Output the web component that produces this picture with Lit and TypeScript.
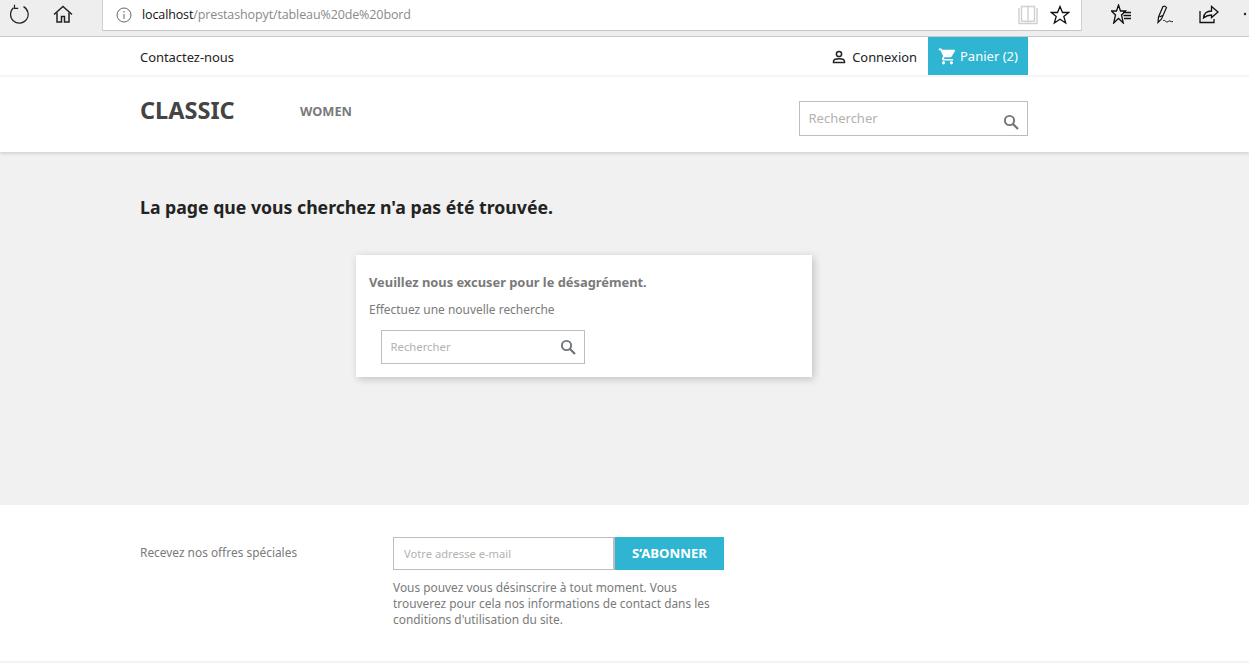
import { LitElement, html, css, svg } from "lit";
import { customElement } from "lit/decorators.js";

const searchIcon = svg`<svg class="si" viewBox="0 0 16 16" width="16" height="16" fill="none" stroke="#6f7478"><circle cx="6.500" cy="6.500" r="4.600" stroke-width="1.900"/><path d="M10 10l5 5" stroke-width="2.200"/></svg>`;

@customElement("app-root")
export class AppRoot extends LitElement {
  static styles = css`
    :host { display: block; height: 670px; overflow: hidden; background: #fff; font-family: "Noto Sans", sans-serif; color: #7a7a7a; }
    * { box-sizing: border-box; }
    .chrome { height: 37px; background: #eeeeee; border-bottom: 1px solid #c9c9c9; display: flex; align-items: flex-start; position: relative; }
    .nav-icons { flex: none; width: 102px; height: 28px; display: flex; align-items: center; }
    .nav-icons svg:first-child { margin-left: 9px; }
    .nav-icons svg:last-child { margin-left: 24px; }
    .addr { flex: none; width: 980px; height: 31px; background: #fff; border-left: 1px solid #d0d0d0; border-right: 1px solid #d0d0d0; border-bottom: 1px solid #c6c6c6; display: flex; align-items: center; padding-left: 13px; font: 12.500px/1 "Open Sans", sans-serif; letter-spacing: -0.120px; }
    .addr .host { color: #111; margin-left: 10px; }
    .addr .path { color: #8a8a8a; }
    .addr .end { margin-left: auto; display: flex; align-items: center; gap: 12px; padding-right: 11px; }
    .tools { flex: none; display: flex; align-items: center; height: 28px; }
    .tools svg:first-child { margin-left: 29px; }
    .tools svg { margin-right: 24px; flex: none; }
    .topbar { height: 40px; border-bottom: 2px solid #f6f6f6; }
    .wrap { width: 888px; margin-left: 140px; display: flex; }
    .topbar .wrap { height: 38px; align-items: center; font-size: 13px; color: #232323; }
    .contact { letter-spacing: -0.050px; margin-top: 2px; }
    .conn { margin-left: auto; display: flex; align-items: center; gap: 5px; margin-top: 2px; margin-right: 11px; font-size: 12.900px; }
    .cart { width: 100px; height: 38px; background: #2fb5d2; color: #fff; display: flex; align-items: center; padding-left: 10px; gap: 3px; font-size: 13px; }
    .header { height: 75px; background: #fff; box-shadow: 0 2px 3px rgba(0,0,0,.12); position: relative; }
    .header .wrap { height: 100%; }
    .logo { font-size: 23.500px; font-weight: 700; color: #444; line-height: 1; margin-top: 22px; width: 160px; }
    .menu { font-size: 12.800px; font-weight: 700; color: #7a7a7a; margin-top: 25px; line-height: 18px; }
    .search { display: flex; justify-content: space-between; border: 1px solid #bdbdbd; background: #fff; color: #b4b2ae; }
    .search.big { width: 229px; height: 35px; margin-left: auto; margin-top: 24px; font-size: 13px; padding: 7px 8px 0 8.500px; }
    .search.big .si { margin-top: 5px; }
    .search.small { width: 204px; height: 34px; margin: 0 0 0 12px; font-size: 11.300px; padding: 8px 8px 0 8.500px; }
    main { height: 353px; background: #f1f1f1; padding-top: 43px; }
    h1 { margin: 0 0 0 140px; font-size: 17.680px; line-height: 24px; font-weight: 700; color: #232323; }
    .card { width: 456px; height: 122px; margin: 36px 0 0 356px; background: #fff; box-shadow: 2px 2px 8px rgba(0,0,0,.2); padding: 18px 13px 0; }
    .card h4 { margin: 0; font-size: 12.870px; line-height: 18px; font-weight: 700; color: #7a7a7a; }
    .card p { margin: 10px 0 12px; font-size: 11.950px; line-height: 17px; color: #7a7a7a; }
    footer { height: 158px; border-bottom: 2px solid #f4f4f4; padding: 32px 0 0 140px; display: flex; font-size: 11.900px; color: #7a7a7a; }
    .offer { width: 253px; padding-top: 7px; line-height: 17px; }
    .email { display: flex; height: 33px; width: 331px; }
    .email .input { width: 222px; border: 1px solid #bdbdbd; border-right-width: 2px; padding: 7px 0 0 10px; color: #b4b2ae; font-size: 11.200px; line-height: 17px; }
    .email .btn { width: 109px; background: #2fb5d2; color: #fff; font-weight: 700; font-size: 13.200px; text-align: center; line-height: 33px; }
    .note { margin: 9px 0 0; width: 331px; line-height: 16px; font-size: 11.900px; }
  `;

  render() {
    return html`
      <div class="chrome">
        <div class="nav-icons">
          <svg width="20" height="20" viewBox="0 0 20 20" fill="none" stroke="#222" stroke-width="1.200"><path d="M4.500 3.800A8.800 8.800 0 1 0 14.500 2.600"/><path d="M5.500 .8v3.600H9.200"/></svg>
          <svg width="20" height="20" viewBox="0 0 20 20" fill="none" stroke="#222" stroke-width="1.500"><path d="M1 10.500L10 2.500l9 8"/><path d="M4 8.500V18h4.500v-5.500h3V18H16V8.500"/></svg>
        </div>
        <div class="addr">
          <svg width="16" height="16" viewBox="0 0 16 16" fill="none" stroke="#666"><circle cx="8" cy="8" r="7"/><path d="M8 7v5M8 4v1.600"/></svg>
          <span class="host">localhost</span><span class="path">/prestashopyt/tableau%20de%20bord</span>
          <span class="end">
            <svg width="20" height="20" viewBox="0 0 20 20" fill="none" stroke="#d0d0d0" stroke-width="1.400"><path d="M1 3v15.500h18V3M3.500 16V1.500H10v15zM16.500 16V1.500H10v15z"/></svg>
            <svg width="20" height="20" viewBox="0 0 20 20" fill="none" stroke="#111" stroke-width="1.300"><path d="M10 1.500l2.500 6h6.300l-5 4 1.900 6.500L10 14.200 4.300 18l1.900-6.500-5-4h6.300z"/></svg>
          </span>
        </div>
        <div class="tools">
          <svg width="20" height="20" viewBox="0 0 20 20" fill="none" stroke="#111" stroke-width="1.300"><path d="M7.500 1l2 6h5l-4 4 1.800 8-4.800-4.500L2.700 19l1.800-8-4-4h5zM12 8.500h8M12.500 11.500h7.500M13 14.500h7"/></svg>
          <svg width="20" height="20" viewBox="0 0 20 20" fill="none" stroke="#111" stroke-width="1.200"><path d="M3 18.500l.5-5.500L8 2.500q2-1 3.500 1L6.500 15zM4.500 13l3-1.500"/><path d="M8 17c1.500-2 2.500 1 4 1s1.500-1.500 3-1 1.500 1 3 .5" stroke-width="1"/></svg>
          <svg width="20" height="20" viewBox="0 0 20 20" fill="none" stroke="#111" stroke-width="1.300"><path d="M1 7v11.500h14V15"/><path d="M4.500 14c.5-5 4-7 8-7V2.500l6.500 5.500-6.500 5.500V11c-3 0-5.500 1-8 3z"/></svg>
          <svg width="4" height="4" viewBox="0 0 4 4"><circle cx="2" cy="2" r="1.200" fill="#222"/></svg>
        </div>
      </div>

      <div class="topbar">
        <div class="wrap">
          <span class="contact">Contactez-nous</span>
          <span class="conn">
            <svg width="16" height="16" viewBox="0 0 16 16" fill="none" stroke="#232323" stroke-width="1.500"><circle cx="8" cy="5" r="2.600"/><path d="M2.500 13.500v-1c0-2 3.500-2.700 5.500-2.700s5.500.7 5.500 2.700v1z"/></svg>
            Connexion
          </span>
          <div class="cart">
            <svg width="19" height="19" viewBox="0 0 24 24" fill="#fff"><path d="M7 18c-1.100 0-2 .9-2 2s.9 2 2 2 2-.9 2-2-.9-2-2-2zM1 2v2h2l3.600 7.600L5.200 14c-.1.300-.2.600-.2 1 0 1.100.9 2 2 2h12v-2H7.400c-.1 0-.2-.1-.2-.2v-.1l.9-1.700h7.500c.7 0 1.400-.4 1.700-1L21.400 5c.1-.1.100-.3.100-.5 0-.6-.4-1-1-1H5.200L4.300 2H1zm16 16c-1.100 0-2 .9-2 2s.9 2 2 2 2-.9 2-2-.9-2-2-2z"/></svg>
            <span>Panier (2)</span>
          </div>
        </div>
      </div>

      <div class="header">
        <div class="wrap">
          <div class="logo">CLASSIC</div>
          <div class="menu">WOMEN</div>
          <div class="search big"><span>Rechercher</span>${searchIcon}</div>
        </div>
      </div>

      <main>
        <h1>La page que vous cherchez n'a pas été trouvée.</h1>
        <div class="card">
          <h4>Veuillez nous excuser pour le désagrément.</h4>
          <p>Effectuez une nouvelle recherche</p>
          <div class="search small"><span>Rechercher</span>${searchIcon}</div>
        </div>
      </main>

      <footer>
        <div class="offer">Recevez nos offres spéciales</div>
        <div>
          <div class="email">
            <div class="input">Votre adresse e-mail</div>
            <div class="btn">S’ABONNER</div>
          </div>
          <p class="note">Vous pouvez vous désinscrire à tout moment. Vous trouverez pour cela nos informations de contact dans les conditions d'utilisation du site.</p>
        </div>
      </footer>
    `;
  }
}
